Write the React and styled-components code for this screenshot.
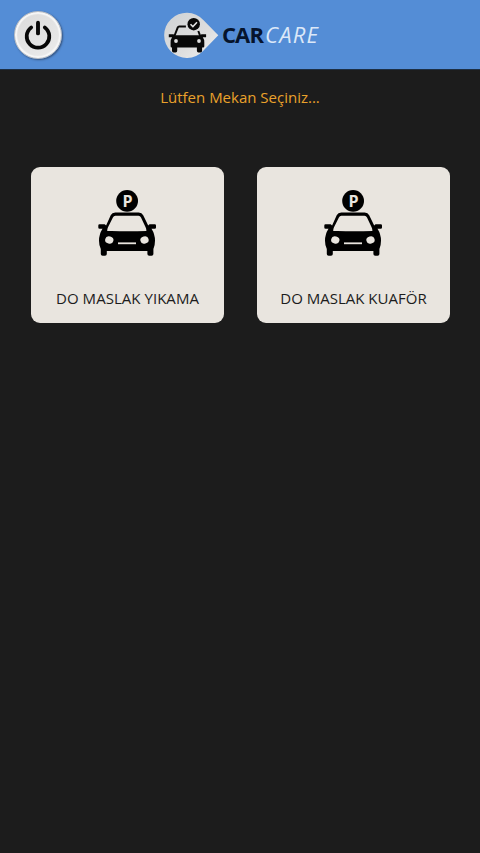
import React from "react";
import styled, { createGlobalStyle } from "styled-components";

const places = [
  { id: 1, name: "DO MASLAK YIKAMA", spacing: "0.04px" },
  { id: 2, name: "DO MASLAK KUAFÖR", spacing: "0px" },
];

function PowerIcon() {
  return (
    <svg width="28" height="30" viewBox="0 0 28 30" fill="none">
      <path
        d="M7.2 7.4a11.3 11.3 0 1 0 13.6 0"
        stroke="#080808"
        strokeWidth="3.7"
        strokeLinecap="round"
      />
      <path d="M14 2.8v10.6" stroke="#080808" strokeWidth="3.9" strokeLinecap="round" />
    </svg>
  );
}

function LogoIcon() {
  return (
    <svg width="56" height="47" viewBox="0 0 56 47">
      <defs>
        <linearGradient id="pin" x1="0" y1="0" x2="1" y2="1">
          <stop offset="0" stopColor="#cfd2d5" />
          <stop offset="0.6" stopColor="#dedede" />
          <stop offset="1" stopColor="#f2f2f2" />
        </linearGradient>
      </defs>
      <path
        d="M55.3 23.3Q46 33 40.3 38.7A22.6 22.6 0 1 1 40.3 7.9Q46 13.6 55.3 23.3Z"
        fill="url(#pin)"
      />
      <path
        d="M11.4 24l3.4-8.600q.4-1 1.500-1h6.600M35.300 19l1.900 5"
        fill="none"
        stroke="#080808"
        strokeWidth="2"
      />
      <path
        d="M5.8 22.3h4.7l1.3 1h25.4l1.3-1h4.6v3h-3.3q1.5 2 1.5 5v4q0 1.3-1.2 1.3h-1v3.2q0 1.6-1.6 1.6h-2q-1.6 0-1.6-1.6v-3.200H14.200v3.200q0 1.600-1.600 1.600h-2q-1.600 0-1.600-1.600v-3.200h-.300q-1.100 0-1.100-1.300v-4q0-3 1.500-5H5.800z"
        fill="#080808"
      />
      <circle cx="13" cy="29" r="1.9" fill="#dedede" />
      <circle cx="36" cy="29" r="1.9" fill="#dedede" />
      <circle cx="30.7" cy="12.2" r="6.2" fill="#080808" />
      <path d="M27.5 12.2l2.4 2.4 4.1-4.4" fill="none" stroke="#e4e4e4" strokeWidth="1.5" />
    </svg>
  );
}

function ParkingIcon() {
  return (
    <svg width="60" height="66" viewBox="0 0 60 66">
      <circle cx="29.1" cy="10.9" r="10.9" fill="#000" />
      <ParkingLetter x="24.6" y="16.8">
        P
      </ParkingLetter>
      <path
        fillRule="evenodd"
        d="M17.3 22.6h23.4q3.2 0 4.5 2.7l5 10.1 1.3-1.2h5.3q1.2 0 1.2 1.3v2q0 1.3-1.3 1.3h-3.2q3.5 5.4 3.5 12 0 4.8-1.6 8.1v5q0 1.8-1.8 1.8h-2.4q-1.8 0-1.8-1.8v-3H8.8v3q0 1.8-1.8 1.8H4.6q-1.8 0-1.8-1.8v-5Q1 55.6 1 50.8q0-6.6 3.5-12H1.6Q.3 38.8.3 37.5v-2q0-1.3 1.2-1.3h5.2l1.4 1.2L12.7 25.300q1.300-2.700 4.600-2.700zM17.400 25.800q-1.700 0-2.500 1.700L10 37.300q-.8 1.600-.8 3.700 6.300-.3 12.600.3 14 .2 26.600-.3 0-2-.8-3.700L43 27.500q-.8-1.700-2.500-1.700z"
        fill="#000"
      />
      <ellipse cx="11.3" cy="50" rx="4.2" ry="3.6" transform="rotate(15 11.3 50)" fill="#e9e5df" />
      <ellipse cx="46.5" cy="50" rx="4.2" ry="3.6" transform="rotate(-15 46.5 50)" fill="#e9e5df" />
      <path d="M20 53.3h18" stroke="#e9e5df" strokeWidth="1.8" />
    </svg>
  );
}

function App() {
  return (
    <>
      <GlobalStyle />
      <Page>
        <Header>
          <PowerButton aria-label="Power">
            <PowerIcon />
          </PowerButton>
          <Logo>
            <LogoIcon />
            <Brand>
              <BrandDark>CAR</BrandDark>
              <BrandLight>CARE</BrandLight>
            </Brand>
          </Logo>
        </Header>
        <Title>Lütfen Mekan Seçiniz...</Title>
        <PlaceList>
          {places.map((place) => (
            <Place key={place.id}>
              <ParkingIcon />
              <PlaceName $spacing={place.spacing}>{place.name}</PlaceName>
            </Place>
          ))}
        </PlaceList>
      </Page>
    </>
  );
}

const GlobalStyle = createGlobalStyle`
  * {
    box-sizing: border-box;
  }

  body {
    margin: 0;
    background-color: #1c1c1c;
    font-family: "Open Sans", sans-serif;
  }

  svg {
    display: block;
    flex-shrink: 0;
  }
`;

const Page = styled.div`
  min-height: 100vh;
  background-color: #1c1c1c;
`;

const Header = styled.header`
  display: grid;
  grid-template-columns: 149px 1fr;
  align-items: center;
  height: 70px;
  padding-left: 14px;
  background-color: #548dd6;
  border-bottom: 1px solid #1d2f45;
`;

const PowerButton = styled.button`
  display: flex;
  align-items: center;
  justify-content: center;
  width: 48px;
  height: 48px;
  padding: 0;
  border: 1px solid #b9bdc3;
  border-radius: 50%;
  background: linear-gradient(145deg, #dadada, #ececec);
  box-shadow: inset 0 0 1px 2px #f7f7f7, 1px 1px 2px 0 #35527c;
  cursor: pointer;
`;

const Logo = styled.div`
  display: flex;
  align-items: center;
  gap: 3px;
  padding-top: 2px;
`;

const Brand = styled.div`
  display: flex;
  align-items: baseline;
  padding-bottom: 3px;
  font-family: "Open Sans", sans-serif;
  font-size: 22px;
  line-height: 28px;
`;

const BrandDark = styled.span`
  width: 43px;
  color: #06142c;
  font-weight: 700;
  letter-spacing: -0.9px;
`;

const BrandLight = styled.span`
  color: #dce8f8;
  font-style: italic;
  font-weight: 500;
  letter-spacing: 1.2px;
`;

const Title = styled.h1`
  margin: 16px 0 0;
  color: #eaa12b;
  font-size: 15px;
  font-weight: 400;
  line-height: 22px;
  text-align: center;
`;

const PlaceList = styled.div`
  display: grid;
  grid-template-columns: 193px 193px;
  gap: 33px;
  padding: 59px 0 0 31px;
`;

const Place = styled.div`
  display: flex;
  flex-direction: column;
  align-items: center;
  height: 156px;
  padding-top: 23px;
  border-radius: 9px;
  background-color: #e9e5df;
  cursor: pointer;
`;

const PlaceName = styled.span`
  margin-top: 31px;
  color: #1c1c1c;
  font-size: 15px;
  line-height: 22px;
  letter-spacing: ${(props) => props.$spacing};
  white-space: nowrap;
`;

const ParkingLetter = styled.text`
  fill: #e9e5df;
  font-family: "Open Sans", sans-serif;
  font-size: 16px;
  font-weight: 700;
`;

export default App;
